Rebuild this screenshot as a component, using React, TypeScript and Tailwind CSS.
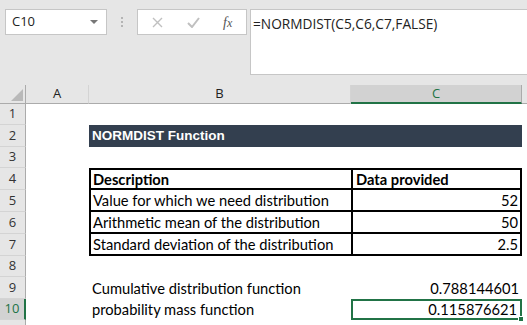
import React from 'react';

const rowHeights = [21, 22, 21, 22, 22, 22, 22, 21, 22, 21, 22];

type Row = {
  b?: React.ReactNode;
  c?: React.ReactNode;
  kind?: 'title' | 'table' | 'plain';
  top?: boolean;
  bold?: boolean;
  selected?: boolean;
};

const rows: Row[] = [
  {},
  { kind: 'title', b: 'NORMDIST Function' },
  {},
  { kind: 'table', top: true, bold: true, b: 'Description', c: 'Data provided' },
  { kind: 'table', b: 'Value for which we need distribution', c: '52' },
  { kind: 'table', b: 'Arithmetic mean of the distribution', c: '50' },
  { kind: 'table', b: 'Standard deviation of the distribution', c: '2.5' },
  {},
  { kind: 'plain', b: 'Cumulative distribution function', c: '0.788144601' },
  { kind: 'plain', b: 'probability mass function', c: '0.115876621', selected: true },
  {},
];

const cellFont = "font-['Lato','Liberation_Sans',sans-serif] text-[14.7px] text-black";

function SheetRow({ row, index, height }: { row: Row; index: number; height: number }) {
  // last row is only partly in view, its number sits below the fold
  const num = index < 10 ? index + 1 : '';
  const header = (
    <div
      className={
        'flex items-center justify-center border-b border-[#d4d4d4] text-[13px] font-["Open_Sans",sans-serif] ' +
        (row.selected
          ? 'bg-[#d2d2d2] text-[#217346] border-r-2 border-r-[#217346]'
          : 'bg-[#e6e6e6] text-[#333] border-r border-r-[#ababab]')
      }
      style={{ height }}
    >
      {num}
    </div>
  );

  if (row.kind === 'title') {
    return (
      <>
        {header}
        <div style={{ height }} />
        <div
          className="col-span-2 flex items-center bg-[#333f4f] pl-[3px] font-['Liberation_Sans',Arial,sans-serif] text-[13.5px] font-bold text-white"
          style={{ height }}
        >
          {row.b}
        </div>
        <div style={{ height }} />
      </>
    );
  }

  if (row.kind === 'table') {
    return (
      <>
        {header}
        <div style={{ height }} />
        <div
          className={
            'flex items-center border-2 border-r-0 border-t-0 border-black pl-[2px] ' +
            cellFont +
            (row.top ? ' border-t-2' : '') +
            (row.bold ? ' font-bold' : '')
          }
          style={{ height }}
        >
          {row.b}
        </div>
        <div
          className={
            'flex items-center border-2 border-t-0 border-black pr-[2px] ' +
            cellFont +
            (row.top ? ' border-t-2' : '') +
            (row.bold ? ' justify-start pl-[3px] font-bold' : ' justify-end')
          }
          style={{ height }}
        >
          {row.c}
        </div>
        <div style={{ height }} />
      </>
    );
  }

  return (
    <>
      {header}
      <div style={{ height }} />
      <div className={'flex items-center pl-[3px] ' + cellFont} style={{ height }}>
        {row.b}
      </div>
      <div
        className={
          'relative flex items-center justify-end pr-[3px] ' +
          cellFont +
          (row.selected ? ' border-2 border-[#217346]' : '')
        }
        style={{ height }}
      >
        {row.c}
        {row.selected && (
          <span className="absolute -bottom-[4px] -right-[4px] h-[6px] w-[6px] border border-white bg-[#217346]" />
        )}
      </div>
      <div style={{ height }} />
    </>
  );
}

export default function App() {
  return (
    <div className="h-[325px] w-[527px] overflow-hidden bg-[#e6e6e6]">
      {/* Formula bar area */}
      <div className="flex h-[85px] items-start pt-[9px]">
        <div className="ml-[5px] flex h-[26px] w-[102px] items-center justify-between border border-[#c6c6c6] bg-white pl-[6px] pr-[8px] font-['Open_Sans',sans-serif] text-[13px] text-[#222]">
          <span>C10</span>
          <svg width="8" height="4" viewBox="0 0 8 4">
            <path d="M0 0 L8 0 L4 4 Z" fill="#777" />
          </svg>
        </div>
        <div className="flex h-[26px] w-[30px] flex-col items-center justify-center gap-[2px]">
          <span className="h-[2px] w-[2px] bg-[#b4b4b4]" />
          <span className="h-[2px] w-[2px] bg-[#b4b4b4]" />
          <span className="h-[2px] w-[2px] bg-[#b4b4b4]" />
        </div>
        <div className="flex h-[26px] w-[110px] items-center border border-[#c6c6c6] bg-white">
          <svg className="ml-[14px]" width="11" height="11" viewBox="0 0 11 11">
            <path d="M1 1 L10 10 M10 1 L1 10" stroke="#c0c0c0" strokeWidth="1.4" />
          </svg>
          <svg className="ml-[24px]" width="13" height="11" viewBox="0 0 13 11">
            <path d="M1 6 L5 10 L12 1" stroke="#c0c0c0" strokeWidth="2" fill="none" />
          </svg>
          <span className="ml-[23px] font-['Liberation_Serif',serif] text-[14px] italic text-[#555]">
            f<span className="text-[12px]">x</span>
          </span>
        </div>
        <div className="ml-[3px] h-[66px] flex-1 border-b border-l border-t border-[#c6c6c6] bg-white pl-[2px] pt-[4px] font-['Open_Sans',sans-serif] text-[13.7px] text-[#222]">
          =NORMDIST(C5,C6,C7,FALSE)
        </div>
      </div>

      {/* Sheet */}
      <div className="grid grid-cols-[26px_63px_262px_171px_1fr] bg-white">
        {/* column headers */}
        <div className="relative h-[19px] border-b border-r border-[#ababab] bg-[#e6e6e6]">
          <svg className="absolute bottom-[2px] right-[2px]" width="12" height="12" viewBox="0 0 12 12">
            <path d="M12 0 L12 12 L0 12 Z" fill="#b9b9b9" />
          </svg>
        </div>
        <div className="flex h-[19px] items-center justify-center border-b border-r border-b-[#ababab] border-r-[#d4d4d4] bg-[#e6e6e6] font-['Open_Sans',sans-serif] text-[13px] text-[#222]">
          A
        </div>
        <div className="flex h-[19px] items-center justify-center border-b border-r border-b-[#ababab] border-r-[#d4d4d4] bg-[#e6e6e6] font-['Open_Sans',sans-serif] text-[13px] text-[#222]">
          B
        </div>
        <div className="flex h-[19px] items-center justify-center border-b-2 border-r border-b-[#217346] border-r-[#ababab] bg-[#d2d2d2] font-['Open_Sans',sans-serif] text-[13px] text-[#217346]">
          C
        </div>
        <div className="h-[19px] border-b border-[#ababab] bg-[#e6e6e6]" />

        {rows.map((row, i) => (
          <SheetRow key={i} row={row} index={i} height={rowHeights[i]} />
        ))}
      </div>
    </div>
  );
}
